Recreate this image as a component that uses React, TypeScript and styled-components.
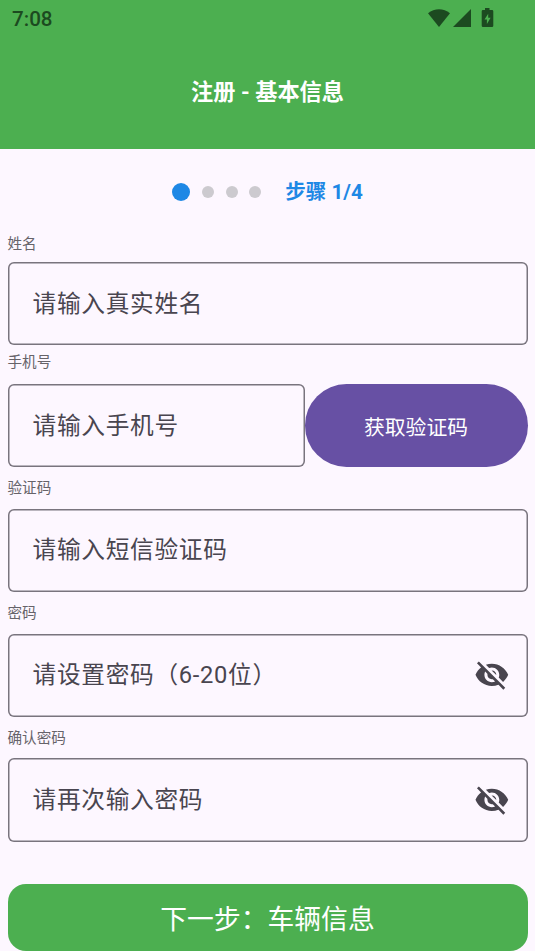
import React from 'react';
import styled, { createGlobalStyle } from 'styled-components';

const Global = createGlobalStyle`
  *, *::before, *::after { box-sizing: border-box; }
  body {
    margin: 0;
    background: #fdf7ff;
    font-family: Roboto, 'Noto Sans CJK SC', sans-serif;
  }
  button { font: inherit; border: 0; padding: 0; margin: 0; cursor: pointer; }
`;

const Screen = styled.div`
  display: flex;
  flex-direction: column;
  width: 535px;
  height: 951px;
  overflow: hidden;
  background: #fdf7ff;
`;

const Header = styled.header`
  height: 148.6px;
  flex: none;
  background: #4caf50;
`;

const StatusBar = styled.div`
  display: flex;
  justify-content: space-between;
  height: 36px;
  padding: 0 40px 0 12px;
`;

const Clock = styled.span`
  font-size: 20.6px;
  line-height: 38px;
  font-weight: 500;
  color: #1c4a20;
`;

const StatusIcons = styled.svg`
  width: 68px;
  height: 22px;
  margin-top: 7px;
  fill: #1c4a20;
`;

const Title = styled.h1`
  margin: 0;
  height: 112px;
  line-height: 112px;
  text-align: center;
  font-size: 22.2px;
  font-weight: 700;
  color: #fff;
`;

const Steps = styled.div`
  display: flex;
  align-items: center;
  height: 86px;
  flex: none;
  padding-left: 172px;
`;

const Dot = styled.span<{ $active?: boolean }>`
  width: ${(p) => (p.$active ? 18 : 12)}px;
  height: ${(p) => (p.$active ? 18 : 12)}px;
  margin-right: 11.8px;
  border-radius: 50%;
  background: ${(p) => (p.$active ? '#1e88e5' : '#cccacf')};
`;

const StepText = styled.span`
  margin-left: 12px;
  font-size: 20.6px;
  line-height: 30px;
  font-weight: 700;
  color: #1e88e5;
`;

const Form = styled.main`
  padding: 0 7.5px;
`;

const Label = styled.div<{ $height: number; $line?: number }>`
  height: ${(p) => p.$height}px;
  line-height: ${(p) => p.$line ?? 42}px;
  font-size: 14.6px;
  color: #666369;
`;

const Row = styled.div`
  display: flex;
`;

const Field = styled.div`
  display: flex;
  flex: 1;
  align-items: center;
  justify-content: space-between;
  height: 83.2px;
  padding: 0 18px 0 25px;
  border-radius: 6px;
  box-shadow: inset 0 0 0 1.5px #79747e;
`;

const Hint = styled.span`
  font-size: 23.7px;
  line-height: 36px;
  letter-spacing: 0.7px;
  white-space: nowrap;
  color: #49454f;
`;

const IconButton = styled.button`
  display: flex;
  background: none;
  color: #49454f;
`;

const CodeButton = styled.button`
  width: 223px;
  height: 83.2px;
  border-radius: 42px;
  background: #6750a4;
  && { font-size: 20.8px; }
  color: #fff;
`;

const NextButton = styled.button`
  width: 100%;
  height: 67px;
  margin-top: 42.3px;
  border-radius: 18px;
  background: #4caf50;
  && { font-size: 26.8px; }
  color: #fff;
`;

function EyeOff() {
  return (
    <IconButton aria-label="显示密码">
      <svg width="35.7" height="35.7" viewBox="0 0 24 24" fill="currentColor">
        <path d="M12 7c2.76 0 5 2.24 5 5 0 .65-.13 1.26-.36 1.83l2.92 2.92c1.51-1.26 2.7-2.89 3.43-4.75-1.73-4.39-6-7.5-11-7.5-1.4 0-2.74.25-3.98.7l2.16 2.16C10.74 7.13 11.35 7 12 7zM2 4.27l2.28 2.28.46.46C3.08 8.3 1.78 10.02 1 12c1.73 4.39 6 7.5 11 7.5 1.55 0 3.03-.3 4.38-.84l.42.42L19.73 22 21 20.73 3.27 3 2 4.27zM7.53 9.8l1.55 1.55c-.05.21-.08.43-.08.65 0 1.66 1.34 3 3 3 .22 0 .44-.03.65-.08l1.55 1.55c-.67.33-1.41.53-2.2.53-2.76 0-5-2.24-5-5 0-.79.2-1.53.53-2.2zm4.31-.78l3.15 3.15.02-.16c0-1.66-1.34-3-3-3l-.17.01z" />
      </svg>
    </IconButton>
  );
}

export default function App() {
  return (
    <Screen>
      <Global />
      <Header>
        <StatusBar>
          <Clock>7:08</Clock>
          <StatusIcons viewBox="0 0 68 22">
            <path d="M1 6.3C7.5.8 16.500.8 23 6.300L12 20Z" />
            <path d="M44 2V20H26Z" />
            <path
              fillRule="evenodd"
              d="M58 1H62.500V3H65Q66.300 3 66.300 4.300V18.700Q66.300 20 65 20H56Q54.700 20 54.700 18.700V4.300Q54.700 3 56 3H58ZM61.200 6.800L57.500 12.600H59.900V17L63.600 10.800H61.200Z"
            />
          </StatusIcons>
        </StatusBar>
        <Title>注册 - 基本信息</Title>
      </Header>
      <Steps>
        <Dot $active />
        <Dot />
        <Dot />
        <Dot />
        <StepText>步骤 1/4</StepText>
      </Steps>
      <Form>
        <Label $height={27.7} $line={19}>姓名</Label>
        <Row>
          <Field><Hint>请输入真实姓名</Hint></Field>
        </Row>
        <Label $height={38.5} $line={34}>手机号</Label>
        <Row>
          <Field><Hint>请输入手机号</Hint></Field>
          <CodeButton>获取验证码</CodeButton>
        </Row>
        <Label $height={41.6}>验证码</Label>
        <Row>
          <Field><Hint>请输入短信验证码</Hint></Field>
        </Row>
        <Label $height={41.6}>密码</Label>
        <Row>
          <Field>
            <Hint>请设置密码（6-20位）</Hint>
            <EyeOff />
          </Field>
        </Row>
        <Label $height={41.6}>确认密码</Label>
        <Row>
          <Field>
            <Hint>请再次输入密码</Hint>
            <EyeOff />
          </Field>
        </Row>
        <NextButton>下一步：车辆信息</NextButton>
      </Form>
    </Screen>
  );
}
